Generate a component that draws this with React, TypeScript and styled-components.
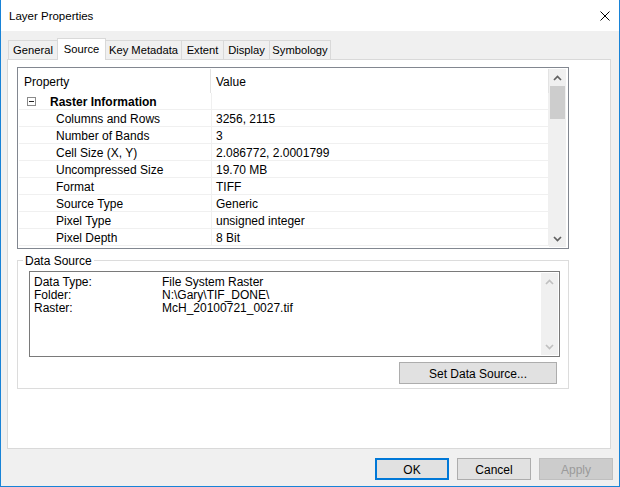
import React from 'react';
import styled, { createGlobalStyle } from 'styled-components';

const GlobalStyle = createGlobalStyle`
  html, body {
    margin: 0;
    padding: 0;
    background: #ffffff;
  }
  body {
    font-family: "Liberation Sans", Arial, sans-serif;
    font-size: 12px;
    color: #000000;
  }
  * {
    box-sizing: border-box;
  }
`;

const Window = styled.div`
  width: 620px;
  height: 487px;
  display: flex;
  flex-direction: column;
  border: 1px solid #1883d7;
  border-top: none;
  background: #f0f0f0;
`;

const TitleBar = styled.div`
  height: 31px;
  flex-shrink: 0;
  background: #ffffff;
  display: flex;
  align-items: center;
  justify-content: space-between;
  padding: 0 9px 0 8px;
  font-size: 11.5px;
`;

const CloseButton = styled.span`
  display: flex;
  width: 10px;
  height: 10px;
`;

const Body = styled.div`
  flex: 1;
  display: flex;
  flex-direction: column;
  padding: 7px 8px 6px 6px;
`;

const TabStrip = styled.div`
  display: flex;
  align-items: flex-start;
  height: 21px;
  padding-left: 1px;
`;

const Tab = styled.div<{ $w: number; $active?: boolean }>`
  position: relative;
  z-index: ${p => (p.$active ? 2 : 1)};
  width: ${p => p.$w}px;
  height: ${p => (p.$active ? 22 : 19)}px;
  margin-top: ${p => (p.$active ? 0 : 2)}px;
  margin-left: -1px;
  display: flex;
  align-items: center;
  justify-content: center;
  padding-bottom: ${p => (p.$active ? 2 : 0)}px;
  background: ${p => (p.$active ? '#ffffff' : '#f0f0f0')};
  border: 1px solid #d9d9d9;
  border-bottom: none;
  font-size: 11.2px;
  white-space: nowrap;

  &:first-child {
    margin-left: 0;
  }
`;

const Panel = styled.div`
  height: 390px;
  background: #ffffff;
  border: 1px solid #d9d9d9;
  padding: 7px 0 0 9px;
`;

const GridBox = styled.div`
  width: 552px;
  height: 182px;
  border: 1px solid #828790;
  padding: 1px;
  display: flex;
`;

const Table = styled.div`
  width: 530px;
  display: flex;
  flex-direction: column;
`;

const HeaderRow = styled.div`
  display: grid;
  grid-template-columns: 192px 1fr;
  height: 24px;
`;

const HeaderCell = styled.div`
  display: flex;
  align-items: center;
  padding: 1px 0 0 5px;
  border-right: 1px solid #e3e3e3;
`;

const Row = styled.div`
  display: grid;
  grid-template-columns: 193px 1fr;
  height: 17px;
  border-bottom: 1px solid #f0f0f0;
`;

const Cell = styled.div<{ $indent?: number }>`
  display: flex;
  align-items: center;
  padding: 1px 0 0 ${p => p.$indent ?? 4}px;
  white-space: nowrap;
  overflow: hidden;
  border-right: 1px solid #f0f0f0;
`;

const CategoryLabel = styled.span`
  font-weight: bold;
  margin-left: 14px;
`;

const MinusBox = styled.span`
  width: 9px;
  height: 9px;
  margin-top: -1px;
  border: 1px solid #8a8a8a;
  display: flex;
  align-items: center;
  justify-content: center;

  &::after {
    content: '';
    width: 5px;
    height: 1px;
    background: #222222;
  }
`;

const ScrollBar = styled.div`
  width: 17px;
  display: flex;
  flex-direction: column;
  background: #f0f0f0;
`;

const ScrollArrow = styled.div`
  height: 17px;
  display: flex;
  align-items: center;
  justify-content: center;
`;

const Thumb = styled.div`
  height: 33px;
  margin: 0 1px 0 1px;
  background: #cdcdcd;
`;

const Spacer = styled.div`
  flex: 1;
`;

const Group = styled.div`
  position: relative;
  width: 552px;
  height: 129px;
  margin-top: 11px;
  border: 1px solid #dcdcdc;
  padding: 10px 8px 0 11px;
`;

const Legend = styled.span`
  position: absolute;
  top: -6px;
  left: 5px;
  padding: 0 2px;
  line-height: 13px;
  background: #ffffff;
`;

const TextBox = styled.div`
  width: 531px;
  height: 86px;
  border: 1px solid #7a7a7a;
  padding: 1px;
  display: flex;
`;

const InfoList = styled.div`
  flex: 1;
  padding: 3px 0 0 3px;
  display: grid;
  grid-template-columns: 128px 1fr;
  grid-auto-rows: 13px;
  line-height: 13px;
  align-content: start;
`;

const ButtonRow = styled.div<{ $pad?: number }>`
  display: flex;
  justify-content: flex-end;
  gap: 8px;
  padding-right: ${p => p.$pad ?? 0}px;
`;

const Button = styled.div<{ $w: number; $variant?: 'default' | 'disabled' }>`
  width: ${p => p.$w}px;
  height: 22px;
  display: flex;
  align-items: center;
  justify-content: center;
  padding-top: 1px;
  background: ${p => (p.$variant === 'disabled' ? '#cccccc' : '#e1e1e1')};
  color: ${p => (p.$variant === 'disabled' ? '#9a9a9a' : '#000000')};
  border: ${p =>
    p.$variant === 'default'
      ? '2px solid #0078d7'
      : p.$variant === 'disabled'
      ? '1px solid #bfbfbf'
      : '1px solid #adadad'};
  white-space: nowrap;
`;

const DialogButtons = styled(ButtonRow)`
  margin-top: 9px;
  margin-right: -2px;
`;

const SourceButtonRow = styled(ButtonRow)`
  margin-top: 5px;
`;

const Chevron = ({ down, color }: { down?: boolean; color: string }) => (
  <svg width="9" height="6" viewBox="0 0 9 6">
    <polyline
      points={down ? '1,1 4.5,4.5 8,1' : '1,5 4.5,1.5 8,5'}
      fill="none"
      stroke={color}
      strokeWidth="1.7"
    />
  </svg>
);

const tabs = [
  { label: 'General', w: 50 },
  { label: 'Source', w: 49, active: true },
  { label: 'Key Metadata', w: 77 },
  { label: 'Extent', w: 43 },
  { label: 'Display', w: 47 },
  { label: 'Symbology', w: 62 },
];

const properties = [
  ['Columns and Rows', '3256, 2115'],
  ['Number of Bands', '3'],
  ['Cell Size (X, Y)', '2.086772, 2.0001799'],
  ['Uncompressed Size', '19.70 MB'],
  ['Format', 'TIFF'],
  ['Source Type', 'Generic'],
  ['Pixel Type', 'unsigned integer'],
  ['Pixel Depth', '8 Bit'],
];

const sourceInfo = [
  ['Data Type:', 'File System Raster'],
  ['Folder:', 'N:\\Gary\\TIF_DONE\\'],
  ['Raster:', 'McH_20100721_0027.tif'],
];

export default function App() {
  return (
    <>
      <GlobalStyle />
      <Window>
        <TitleBar>
          <span>Layer Properties</span>
          <CloseButton>
            <svg width="10" height="10" viewBox="0 0 10 10">
              <path d="M0.5 0.5 L9.5 9.5 M9.5 0.5 L0.5 9.5" stroke="#000" strokeWidth="1" />
            </svg>
          </CloseButton>
        </TitleBar>
        <Body>
          <TabStrip>
            {tabs.map(t => (
              <Tab key={t.label} $w={t.w} $active={t.active}>
                {t.label}
              </Tab>
            ))}
          </TabStrip>
          <Panel>
            <GridBox>
              <Table>
                <HeaderRow>
                  <HeaderCell>Property</HeaderCell>
                  <HeaderCell>Value</HeaderCell>
                </HeaderRow>
                <Row>
                  <Cell $indent={8}>
                    <MinusBox />
                    <CategoryLabel>Raster Information</CategoryLabel>
                  </Cell>
                  <Cell />
                </Row>
                {properties.map(([k, v]) => (
                  <Row key={k}>
                    <Cell $indent={37}>{k}</Cell>
                    <Cell>{v}</Cell>
                  </Row>
                ))}
              </Table>
              <ScrollBar>
                <ScrollArrow>
                  <Chevron color="#606060" />
                </ScrollArrow>
                <Thumb />
                <Spacer />
                <ScrollArrow>
                  <Chevron down color="#606060" />
                </ScrollArrow>
              </ScrollBar>
            </GridBox>
            <Group>
              <Legend>Data Source</Legend>
              <TextBox>
                <InfoList>
                  {sourceInfo.map(([k, v]) => (
                    <React.Fragment key={k}>
                      <span>{k}</span>
                      <span>{v}</span>
                    </React.Fragment>
                  ))}
                </InfoList>
                <ScrollBar>
                  <ScrollArrow>
                    <Chevron color="#c0c0c0" />
                  </ScrollArrow>
                  <Spacer />
                  <ScrollArrow>
                    <Chevron down color="#c0c0c0" />
                  </ScrollArrow>
                </ScrollBar>
              </TextBox>
              <SourceButtonRow $pad={3}>
                <Button $w={158}>Set Data Source...</Button>
              </SourceButtonRow>
            </Group>
          </Panel>
          <DialogButtons>
            <Button $w={74} $variant="default">OK</Button>
            <Button $w={74}>Cancel</Button>
            <Button $w={74} $variant="disabled">Apply</Button>
          </DialogButtons>
        </Body>
      </Window>
    </>
  );
}
